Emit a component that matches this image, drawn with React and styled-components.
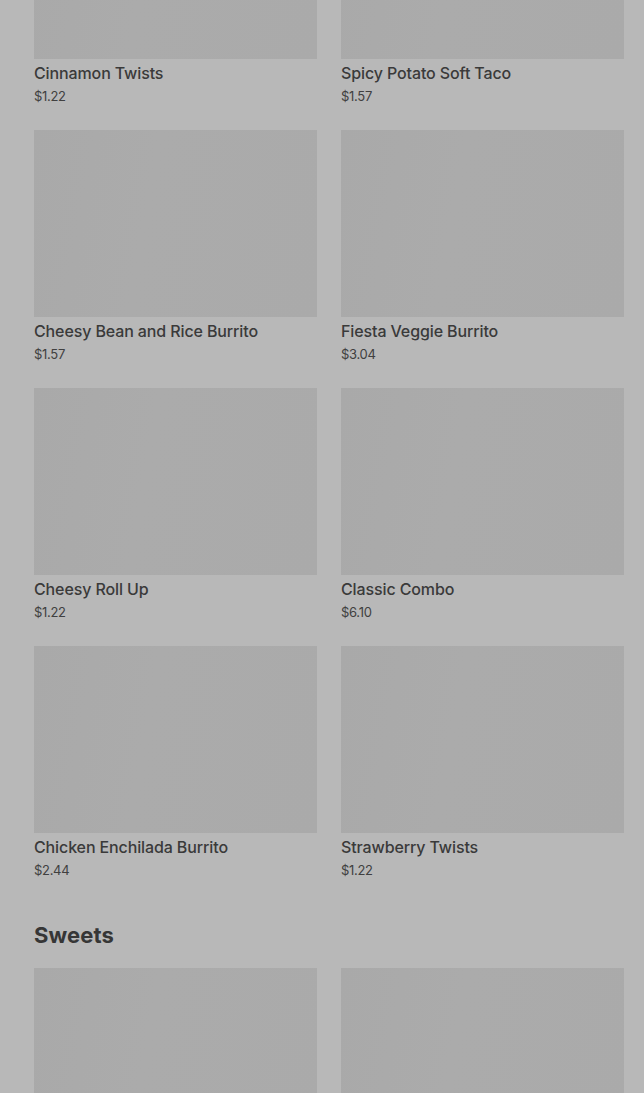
import React from "react";
import styled, { createGlobalStyle } from "styled-components";

const Global = createGlobalStyle`
  html, body { margin: 0; padding: 0; background: #b8b8b8; }
  body { font-family: Inter, "Noto Sans", sans-serif; overflow: hidden; }
`;

const Page = styled.main`
  padding: 0 20px 0 34px;
  margin-top: -128px;
  display: flex;
  flex-direction: column;
`;

const Section = styled.section`
  display: flex;
  flex-direction: column;
  margin-bottom: ${(p) => p.$gap || 0}px;
`;

const Heading = styled.h2`
  margin: 0 0 19px;
  font-size: 22px;
  line-height: 28px;
  font-weight: 700;
  color: #363636;
  letter-spacing: 0.1px;
`;

const Grid = styled.div`
  display: grid;
  grid-template-columns: 1fr 1fr;
  column-gap: 24px;
  row-gap: 25px;
`;

const Card = styled.article`
  display: flex;
  flex-direction: column;
`;

const Thumb = styled.div`
  height: 187px;
  background: linear-gradient(100deg, #a9a9a9 0%, #ababab 40%, #aaaaaa 100%);
`;

const Name = styled.div`
  margin-top: 4px;
  font-size: 16px;
  line-height: 20px;
  font-weight: 500;
  color: #3a3a3a;
  letter-spacing: -0.12px;
`;

const Price = styled.div`
  margin-top: 4px;
  font-size: 13px;
  line-height: 18px;
  font-weight: 400;
  color: #404040;
  letter-spacing: -0.3px;
`;

const items = [
  ["Cinnamon Twists", "$1.22"],
  ["Spicy Potato Soft Taco", "$1.57"],
  ["Cheesy Bean and Rice Burrito", "$1.57"],
  ["Fiesta Veggie Burrito", "$3.04"],
  ["Cheesy Roll Up", "$1.22"],
  ["Classic Combo", "$6.10"],
  ["Chicken Enchilada Burrito", "$2.44"],
  ["Strawberry Twists", "$1.22"],
];

const sweets = [
  ["Cinnamon Twists", "$1.22"],
  ["Strawberry Twists", "$1.22"],
];

function Item({ name, price }) {
  return (
    <Card>
      <Thumb />
      <Name>{name}</Name>
      <Price>{price}</Price>
    </Card>
  );
}

export default function App() {
  return (
    <>
      <Global />
      <Page>
        <Section $gap={42}>
          <Grid>
            {items.map(([n, p]) => (
              <Item key={n} name={n} price={p} />
            ))}
          </Grid>
        </Section>
        <Section>
          <Heading>Sweets</Heading>
          <Grid>
            {sweets.map(([n, p]) => (
              <Item key={n} name={n} price={p} />
            ))}
          </Grid>
        </Section>
      </Page>
    </>
  );
}
